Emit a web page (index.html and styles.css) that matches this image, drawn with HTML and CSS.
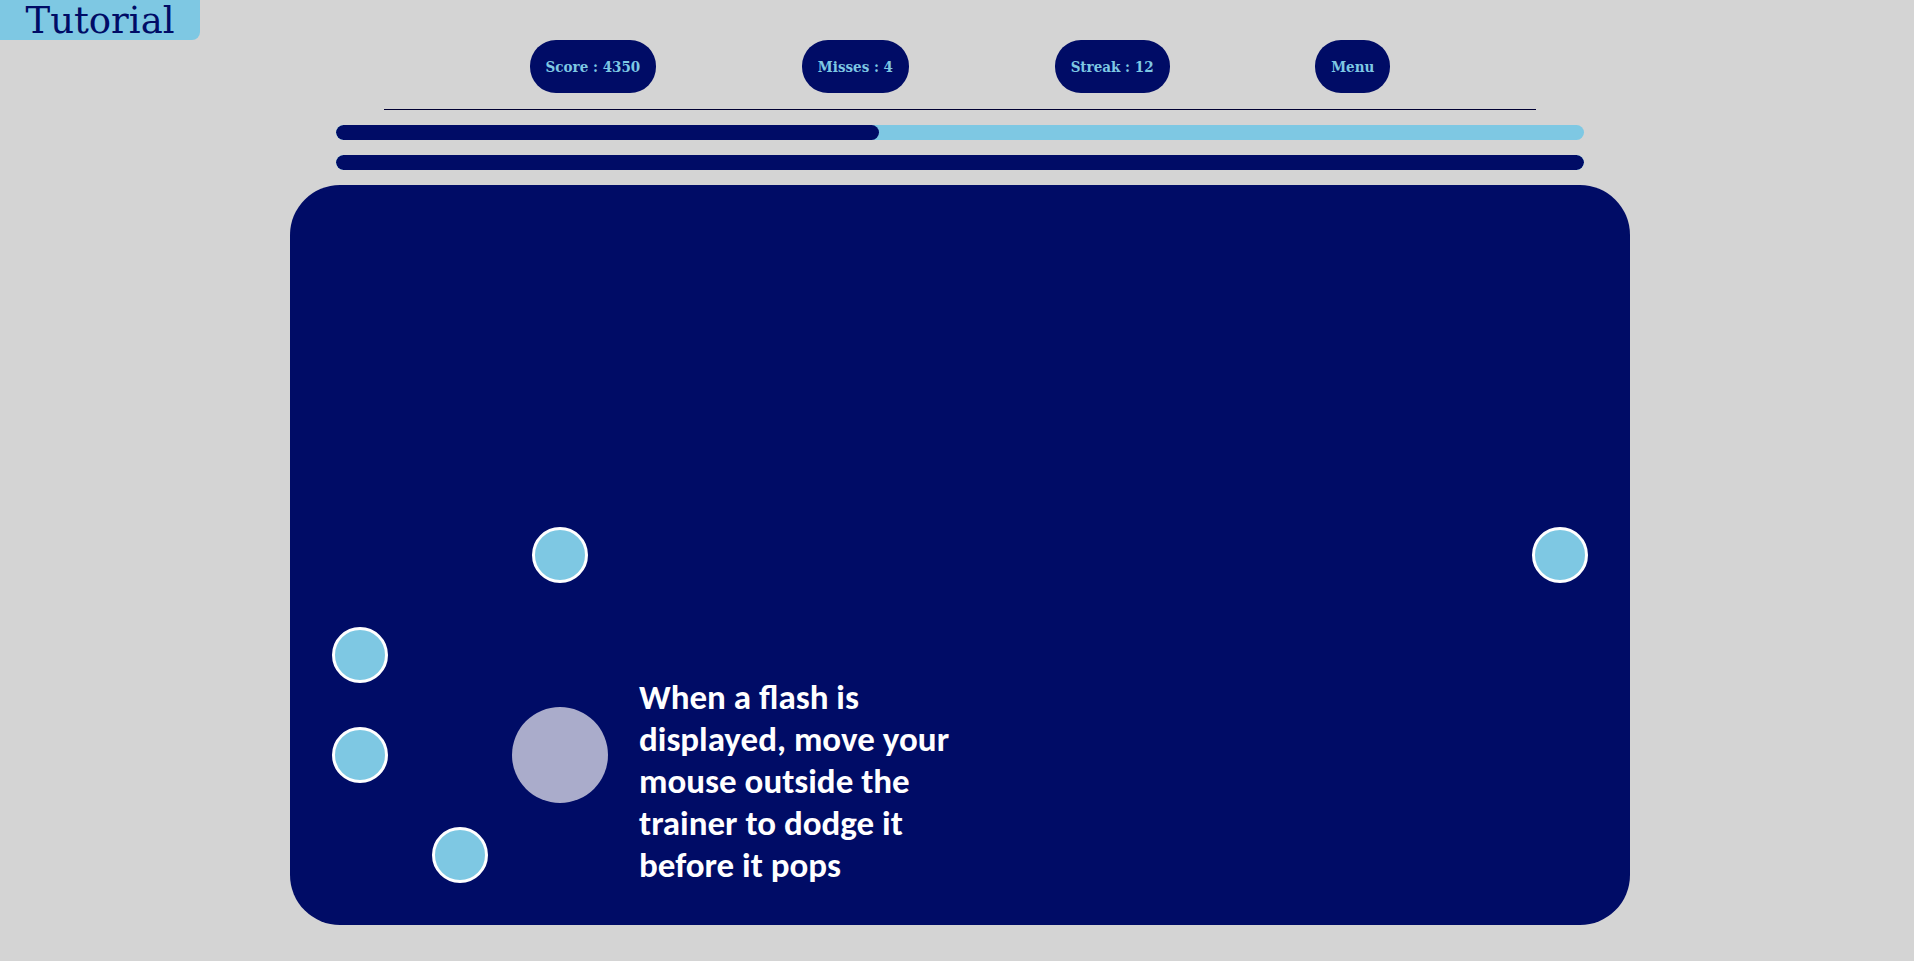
FILE: index.html
```html
<!DOCTYPE html>
<html lang="en">
<head>
<meta charset="utf-8">
<title>Tutorial</title>
<link rel="stylesheet" href="styles.css">
</head>
<body>
<h1 class="mode">Tutorial</h1>
<main class="game">
  <header class="stats">
    <p class="pill">Score : 4350</p>
    <p class="pill">Misses : 4</p>
    <p class="pill">Streak : 12</p>
    <button class="pill" type="button">Menu</button>
  </header>
  <div class="bar" role="progressbar" aria-label="Time" aria-valuenow="43"><div class="bar-fill" style="width: 43.5%"></div></div>
  <div class="bar" role="progressbar" aria-label="Health" aria-valuenow="100"><div class="bar-fill" style="width: 100%"></div></div>
  <section class="trainer" aria-label="Trainer">
    <span class="ball" style="left: 270px; top: 370px"></span>
    <span class="ball" style="left: 1270px; top: 370px"></span>
    <span class="ball" style="left: 70px; top: 470px"></span>
    <span class="ball" style="left: 70px; top: 570px"></span>
    <span class="ball" style="left: 170px; top: 670px"></span>
    <span class="flash" style="left: 270px; top: 570px"></span>
    <p class="hint">When a flash is displayed, move your mouse outside the trainer to dodge it before it pops</p>
  </section>
</main>
</body>
</html>
```
FILE: styles.css
```css
:root {
  --navy: #000c66;
  --sky: #7ec8e3;
}

* {
  box-sizing: border-box;
}

body {
  margin: 0;
  padding-left: 6px;
  background: #d4d4d4;
  color: var(--navy);
}

.mode {
  position: absolute;
  top: 0;
  left: 0;
  width: 200px;
  height: 40px;
  margin: 0;
  border-bottom-right-radius: 8px;
  background: var(--sky);
  font-family: "Roboto Slab", "DejaVu Serif", serif;
  font-size: 37px;
  font-weight: 400;
  line-height: 42px;
  text-align: center;
}

.game {
  display: flex;
  flex-direction: column;
  gap: 15px;
  max-width: 1340px;
  margin: 0 auto;
  padding-top: 40px;
}

.stats {
  display: flex;
  justify-content: space-evenly;
  margin: 0 94px;
  padding-bottom: 16px;
  border-bottom: 1px solid #000033;
}

.pill {
  margin: 0;
  padding: 17px 16px 15px;
  border: 0;
  border-radius: 26px;
  background: var(--navy);
  color: var(--sky);
  font-family: "Roboto Slab", "DejaVu Serif Condensed", "DejaVu Serif", serif;
  font-size: 15px;
  font-weight: 700;
  line-height: 21px;
}

.bar {
  height: 15px;
  margin: 0 46px;
  overflow: hidden;
  border-radius: 8px;
  background: var(--sky);
}

.bar-fill {
  height: 100%;
  border-radius: 8px;
  background: var(--navy);
}

.trainer {
  position: relative;
  min-height: 740px;
  border-radius: 50px;
  background: var(--navy);
}

.ball,
.flash {
  position: absolute;
  border-radius: 50%;
  transform: translate(-50%, -50%);
}

.ball {
  width: 56px;
  height: 56px;
  border: 3px solid #fff;
  background: var(--sky);
}

.flash {
  width: 96px;
  height: 96px;
  background: #aaaccb;
}

.hint {
  position: absolute;
  top: 491px;
  left: 349px;
  width: 330px;
  margin: 0;
  color: #fff;
  font-family: Calibri, Carlito, "Open Sans", sans-serif;
  font-size: 35px;
  font-weight: 700;
  line-height: 42px;
}
```
